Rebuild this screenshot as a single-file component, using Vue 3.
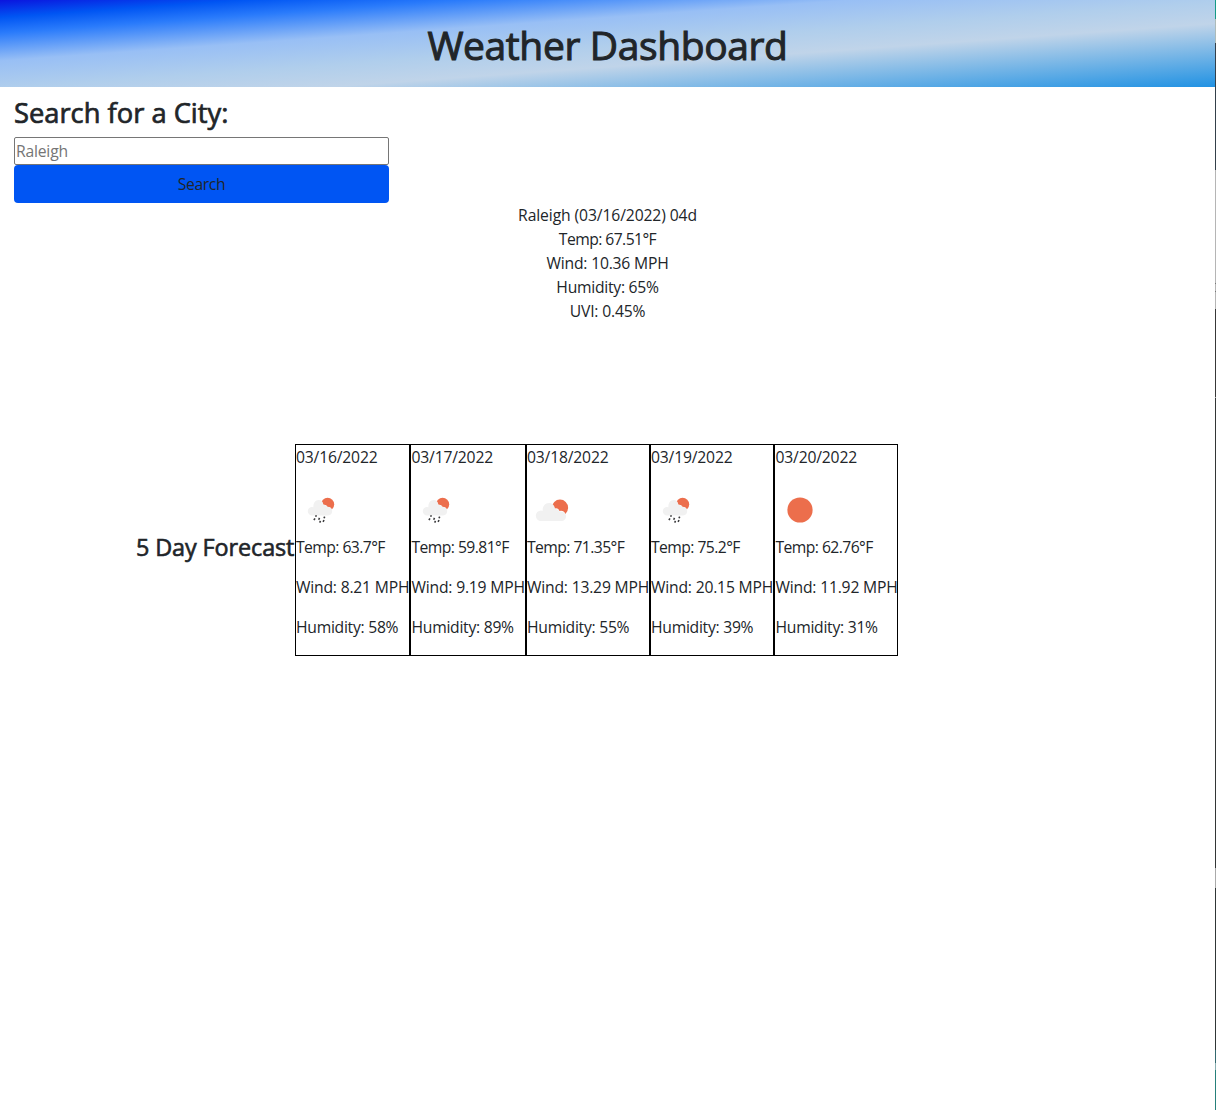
<script setup>
const current = [
  { text: 'Raleigh (03/16/2022) 04d', key: 'city' },
  { text: 'Temp: 67.51°F', key: 'temp' },
  { text: 'Wind: 10.36 MPH', key: 'wind' },
  { text: 'Humidity: 65%', key: 'humidity' },
  { text: 'UVI: 0.45%', key: 'uvi' },
]
const days = [
  { date: '03/16/2022', icon: 'rain', temp: '63.7', wind: '8.21', humidity: 58, width: 115 },
  { date: '03/17/2022', icon: 'rain', temp: '59.81', wind: '9.19', humidity: 89, width: 116 },
  { date: '03/18/2022', icon: 'cloud', temp: '71.35', wind: '13.29', humidity: 55, width: 124 },
  { date: '03/19/2022', icon: 'rain', temp: '75.2', wind: '20.15', humidity: 39, width: 124 },
  { date: '03/20/2022', icon: 'sun', temp: '62.76', wind: '11.92', humidity: 31, width: 124 },
]
</script>

<template>
  <div class="page">
    <div class="main">
      <header class="banner"><h1>Weather Dashboard</h1></header>
      <section class="search">
        <h3>Search for a City:</h3>
        <input type="text" placeholder="Raleigh" />
        <button type="button">Search</button>
      </section>
      <section class="current">
        <p v-for="line in current" :key="line.key" :class="line.key">{{ line.text }}</p>
      </section>
      <section class="forecast">
        <h4>5 Day Forecast</h4>
        <article v-for="d in days" :key="d.date" class="day" :style="{ width: d.width + 'px' }">
          <p class="date">{{ d.date }}</p>
          <svg width="50" height="50" viewBox="0 0 50 50">
            <circle v-if="d.icon === 'sun'" cx="25" cy="25" r="12.6" fill="#ec6e4c" />
            <template v-else-if="d.icon === 'cloud'">
              <circle cx="33" cy="22.7" r="8.1" fill="#ec6e4c" />
              <path fill="#fff" d="M24 20q3.500 1 3.500 3.500q4-1 5 2.500q4-1 6 3l-2 5H24z" />
              <path fill="#f1f1f1" d="M14 36a5.200 5.200 0 0 1 0-10.400q1 0 1.700.3c-.4-4.200 2-8 6.300-8c3.500 0 5.600 2.400 5.900 6c2.300-.2 4 1 4.500 2.500c4 0 6.600 1.600 6.600 4.800s-2.300 4.800-4.800 4.800z" />
            </template>
            <template v-else>
              <circle cx="31.600" cy="19.300" r="6.600" fill="#ec6e4c" />
              <path fill="#fff" d="M24 17q3 .8 3.300 2.800q3-.5 4 2q3-.2 4.500 2.700l-1 5H24z" />
              <path fill="#f1f1f1" d="M16 30.500a4.200 4.200 0 0 1 0-8.400q.8 0 1.400.2c-.3-3.900 1.800-7.200 5.300-7.200c2.800 0 4.500 1.900 4.700 4.700c1.900-.1 3.300.8 3.700 2c3.200.1 5.100 1.500 5.100 4.300s-1.700 4.400-4 4.400z" />
              <path stroke="#3c3c3e" stroke-width="1.600" fill="none" d="M20.300 30.200l-.6 1.500M18.900 33.300l-.9 1.900M23.500 32.900l-.8 1.800M24.500 35.900l-.8 1.700M28.700 31.600l-.7 1.700M28 35l-.9 1.800" />
            </template>
          </svg>
          <p class="temp">Temp: {{ d.temp }}°F</p>
          <p class="wind">Wind: {{ d.wind }} MPH</p>
          <p class="humidity">Humidity: {{ d.humidity }}%</p>
        </article>
      </section>
    </div>
    <div class="edge"></div>
  </div>
</template>

<style>
body { margin: 0; background: #fff; }
</style>
<style scoped>
* { box-sizing: border-box; }
.page {
  display: flex;
  height: 1110px;
  overflow: hidden;
  color: #212529;
  font: 15.7px/24px "Open Sans", "Noto Sans", sans-serif;
}
.main { width: 1215px; }
.edge {
  width: 1px;
  background: linear-gradient(#159a86 0 19px, #aebbb9 19px 43px, #34404a 43px 170px, #b5b5b5 170px 283px, #777 283px 284px, #b5b5b5 284px 291px, #777 291px 292px, #b5b5b5 292px 309px, #383838 309px 397px, #aaa 397px 398px, #333636 398px 868px, #aaa 868px 888px, #303636 888px 1050px, #34696f 1050px 1063px, #88aeb0 1063px 1070px, #26807a 1070px);
}
h1, h3, h4, p { margin: 0; }
h1, h3, h4 { font-weight: 400; white-space: nowrap; }
.banner {
  height: 87px;
  padding-top: 21px;
  text-align: center;
  background: linear-gradient(to bottom right, #0b14de 0%, #0055f3 10%, #2a7bfb 19%, #98bff5 35%, #b0ceec 51%, #c0d4e9 63.5%, #2192e3 100%);
}
h1 {
  font-size: 39px;
  line-height: 48px;
  letter-spacing: -.38px;
  -webkit-text-stroke: 1px #212529;
}
.search {
  display: flex;
  flex-direction: column;
  width: 389px;
  padding: 9px 0 0 14px;
}
h3 {
  margin-bottom: 8px;
  font-size: 27.300px;
  line-height: 33px;
  -webkit-text-stroke: .7px #212529;
}
input {
  height: 28px;
  padding: 1px;
  border: 1px solid #767676;
  border-radius: 2px;
  font: inherit;
  letter-spacing: -.2px;
  outline: none;
}
input::placeholder { color: #757575; opacity: 1; }
button {
  height: 38px;
  border: 0;
  border-radius: 4px;
  background: #0055f3;
  color: #212529;
  font: inherit;
  letter-spacing: -.4px;
}
.current { text-align: center; }
.city { letter-spacing: -.11px; }
.date { letter-spacing: -.18px; }
.temp { letter-spacing: -.56px; }
.wind { letter-spacing: -.2px; }
.humidity { letter-spacing: -.27px; }
.uvi { letter-spacing: -.18px; }
.forecast {
  display: flex;
  align-items: center;
  width: 762px;
  height: 212px;
  margin: 121px 0 0 136px;
}
h4 {
  width: 159px;
  margin-bottom: 6px;
  font-size: 23.400px;
  line-height: 29px;
  letter-spacing: -.1px;
  -webkit-text-stroke: .6px #212529;
}
.day {
  flex: none;
  height: 212px;
  border: 1px solid #000;
  white-space: nowrap;
}
.day p { margin-bottom: 16px; }
.day:nth-of-type(2) p, .day:nth-of-type(5) p { padding-left: .5px; }
.day svg { display: block; }
</style>
